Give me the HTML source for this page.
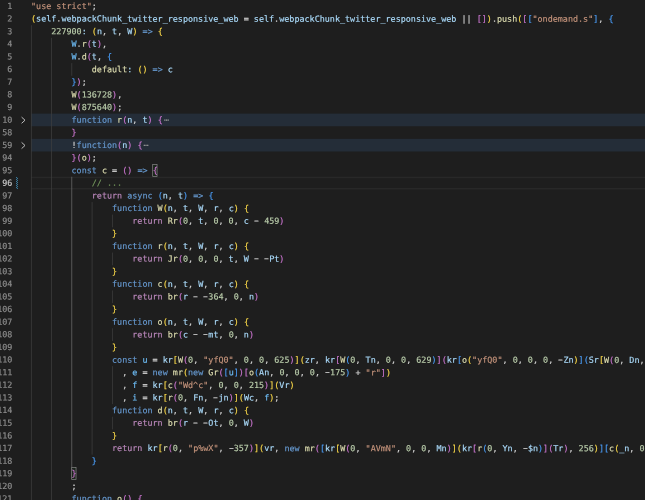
<!DOCTYPE html>
<html lang="en">
<head>
<meta charset="utf-8">
<title>ondemand.s.js</title>
<style>
html,body{margin:0;padding:0;background:#1e1e1e;}
body{width:645px;height:500px;overflow:hidden;position:relative;}
.ed{position:absolute;left:0;top:0;width:645px;height:500px;overflow:hidden;background:#1e1e1e;color:#d4d4d4;
font-family:"DejaVu Sans Mono", "Liberation Mono", monospace;font-size:8.42px;line-height:12.63px;letter-spacing:0.002px;
font-variant-ligatures:none;-webkit-text-stroke:0.15px;text-rendering:geometricPrecision;font-kerning:none;-webkit-font-smoothing:antialiased;}
.l,.ln{position:absolute;height:12.63px;white-space:pre;transform-origin:0 0;}
.l{left:30.8px;}
.ln{left:-20px;width:32.4px;text-align:right;color:#8e8e8e;}
.ln.a{color:#cccccc;}
.s{color:#c5947c}.v{color:#aadafa}.k{color:#679ad1}.c{color:#bc89bd}.f{color:#dcdcaf}
.n{color:#bacdab}.m{color:#74985c}.K{color:#6fbff9}
.b1{color:#f9d849}.b2{color:#cc76d1}.b3{color:#4a9df8}
.h{display:inline-block;transform:scaleX(1.75) translateY(-0.35px);}
.fd{color:#9a9a9a;margin-left:1.1px;position:relative;top:-0.3px}
.tx{position:absolute;left:0;top:0;width:645px;height:500px;will-change:transform;}
.ov{position:absolute;left:0;top:0;}
.dd{position:absolute;width:2.2px;background:repeating-linear-gradient(-45deg,#3a7798 0,#3a7798 0.75px,#1e2a30 0.75px,#1e2a30 1.5px);}

</style>
</head>
<body>
<div class="ed">
<div class="dd" style="left:16.3px;top:176.77px;height:12.63px"></div>
<svg class="ov" width="645" height="500" viewBox="0 0 645 500"><rect x="31.1" y="113.62" width="620" height="12.63" fill="#242d38"/><rect x="31.1" y="138.88" width="620" height="12.63" fill="#242d38"/><rect x="31.1" y="176.77" width="620" height="1.4" fill="#282828"/><rect x="31.1" y="188.00" width="620" height="1.4" fill="#282828"/><rect x="30.95" y="25.21" width="0.7" height="479.94" fill="#404040"/><rect x="51.21" y="37.84" width="0.7" height="467.31" fill="#404040"/><rect x="71.47" y="63.10" width="0.7" height="12.63" fill="#404040"/><rect x="71.47" y="176.77" width="0.7" height="290.49" fill="#707070"/><rect x="91.72" y="202.03" width="0.7" height="252.60" fill="#404040"/><rect x="111.98" y="214.66" width="0.7" height="12.63" fill="#404040"/><rect x="111.98" y="252.55" width="0.7" height="12.63" fill="#404040"/><rect x="111.98" y="290.44" width="0.7" height="12.63" fill="#404040"/><rect x="111.98" y="328.33" width="0.7" height="12.63" fill="#404040"/><rect x="111.98" y="366.22" width="0.7" height="37.89" fill="#404040"/><rect x="111.98" y="416.74" width="0.7" height="12.63" fill="#404040"/><rect x="152.70" y="164.49" width="4.36" height="11.93" fill="rgba(0,100,0,0.1)" stroke="#888888" stroke-width="0.7"/><rect x="71.67" y="467.61" width="4.36" height="11.93" fill="rgba(0,100,0,0.1)" stroke="#888888" stroke-width="0.7"/><path d="M21.60 117.12 L25.00 120.22 L21.60 123.32" fill="none" stroke="#c5c5c5" stroke-width="0.95"/><path d="M21.60 142.38 L25.00 145.48 L21.60 148.58" fill="none" stroke="#c5c5c5" stroke-width="0.95"/></svg>
<div class="tx">
<div class="ln" style="top:-1px;transform:matrix(1,0.0005,0,1,0,0.950)">1</div>
<div class="l" style="top:-1px;transform:matrix(1,0.0005,0,1,0,0.950)"><span class="s">"use strict"</span>;</div>
<div class="ln" style="top:12px;transform:matrix(1,0.0005,0,1,0,0.580)">2</div>
<div class="l" style="top:12px;transform:matrix(1,0.0005,0,1,0,0.580)"><span class="b1">(</span><span class="v">self</span>.<span class="v">webpackChunk_twitter_responsive_web</span> = <span class="v">self</span>.<span class="v">webpackChunk_twitter_responsive_web</span> || <span class="b2">[</span><span class="b2">]</span><span class="b1">)</span>.<span class="f">push</span><span class="b1">(</span><span class="b2">[</span><span class="b3">[</span><span class="s">"ondemand.s"</span><span class="b3">]</span>, <span class="b3">{</span></div>
<div class="ln" style="top:25px;transform:matrix(1,0.0005,0,1,0,0.210)">3</div>
<div class="l" style="top:25px;transform:matrix(1,0.0005,0,1,0,0.210)">    <span class="n">227900</span><span class="v">:</span> <span class="b1">(</span><span class="v">n</span>, <span class="v">t</span>, <span class="v">W</span><span class="b1">)</span> <span class="k">=&gt;</span> <span class="b1">{</span></div>
<div class="ln" style="top:37px;transform:matrix(1,0.0005,0,1,0,0.840)">4</div>
<div class="l" style="top:37px;transform:matrix(1,0.0005,0,1,0,0.840)">        <span class="K">W</span>.<span class="f">r</span><span class="b2">(</span><span class="v">t</span><span class="b2">)</span>,</div>
<div class="ln" style="top:50px;transform:matrix(1,0.0005,0,1,0,0.470)">5</div>
<div class="l" style="top:50px;transform:matrix(1,0.0005,0,1,0,0.470)">        <span class="K">W</span>.<span class="f">d</span><span class="b2">(</span><span class="v">t</span>, <span class="b3">{</span></div>
<div class="ln" style="top:63px;transform:matrix(1,0.0005,0,1,0,0.100)">6</div>
<div class="l" style="top:63px;transform:matrix(1,0.0005,0,1,0,0.100)">            <span class="f">default</span><span class="v">:</span> <span class="b1">(</span><span class="b1">)</span> <span class="k">=&gt;</span> <span class="v">c</span></div>
<div class="ln" style="top:75px;transform:matrix(1,0.0005,0,1,0,0.730)">7</div>
<div class="l" style="top:75px;transform:matrix(1,0.0005,0,1,0,0.730)">        <span class="b3">}</span><span class="b2">)</span>;</div>
<div class="ln" style="top:88px;transform:matrix(1,0.0005,0,1,0,0.360)">8</div>
<div class="l" style="top:88px;transform:matrix(1,0.0005,0,1,0,0.360)">        <span class="f">W</span><span class="b2">(</span><span class="n">136728</span><span class="b2">)</span>,</div>
<div class="ln" style="top:100px;transform:matrix(1,0.0005,0,1,0,0.990)">9</div>
<div class="l" style="top:100px;transform:matrix(1,0.0005,0,1,0,0.990)">        <span class="f">W</span><span class="b2">(</span><span class="n">875640</span><span class="b2">)</span>;</div>
<div class="ln" style="top:113px;transform:matrix(1,0.0005,0,1,0,0.620)">10</div>
<div class="l" style="top:113px;transform:matrix(1,0.0005,0,1,0,0.620)">        <span class="k">function</span> <span class="f">r</span><span class="b2">(</span><span class="v">n</span>, <span class="v">t</span><span class="b2">)</span> <span class="b2">{</span><span class="fd">⋯</span></div>
<div class="ln" style="top:126px;transform:matrix(1,0.0005,0,1,0,0.250)">58</div>
<div class="l" style="top:126px;transform:matrix(1,0.0005,0,1,0,0.250)">        <span class="b2">}</span></div>
<div class="ln" style="top:138px;transform:matrix(1,0.0005,0,1,0,0.880)">59</div>
<div class="l" style="top:138px;transform:matrix(1,0.0005,0,1,0,0.880)">        !<span class="k">function</span><span class="b2">(</span><span class="v">n</span><span class="b2">)</span> <span class="b2">{</span><span class="fd">⋯</span></div>
<div class="ln" style="top:151px;transform:matrix(1,0.0005,0,1,0,0.510)">94</div>
<div class="l" style="top:151px;transform:matrix(1,0.0005,0,1,0,0.510)">        <span class="b2">}</span><span class="b2">(</span><span class="f">o</span><span class="b2">)</span>;</div>
<div class="ln" style="top:164px;transform:matrix(1,0.0005,0,1,0,0.140)">95</div>
<div class="l" style="top:164px;transform:matrix(1,0.0005,0,1,0,0.140)">        <span class="k">const</span> <span class="f">c</span> = <span class="b2">(</span><span class="b2">)</span> <span class="k">=&gt;</span> <span class="b2">{</span></div>
<div class="ln a" style="top:176px;transform:matrix(1,0.0005,0,1,0,0.770)">96</div>
<div class="l" style="top:176px;transform:matrix(1,0.0005,0,1,0,0.770)">            <span class="m">// ...</span></div>
<div class="ln" style="top:189px;transform:matrix(1,0.0005,0,1,0,0.400)">97</div>
<div class="l" style="top:189px;transform:matrix(1,0.0005,0,1,0,0.400)">            <span class="c">return</span> <span class="k">async</span> <span class="b3">(</span><span class="v">n</span>, <span class="v">t</span><span class="b3">)</span> <span class="k">=&gt;</span> <span class="b3">{</span></div>
<div class="ln" style="top:202px;transform:matrix(1,0.0005,0,1,0,0.030)">98</div>
<div class="l" style="top:202px;transform:matrix(1,0.0005,0,1,0,0.030)">                <span class="k">function</span> <span class="f">W</span><span class="b1">(</span><span class="v">n</span>, <span class="v">t</span>, <span class="v">W</span>, <span class="v">r</span>, <span class="v">c</span><span class="b1">)</span> <span class="b1">{</span></div>
<div class="ln" style="top:214px;transform:matrix(1,0.0005,0,1,0,0.660)">99</div>
<div class="l" style="top:214px;transform:matrix(1,0.0005,0,1,0,0.660)">                    <span class="c">return</span> <span class="f">Rr</span><span class="b2">(</span><span class="n">0</span>, <span class="v">t</span>, <span class="n">0</span>, <span class="n">0</span>, <span class="v">c</span> <span class="h">-</span> <span class="n">459</span><span class="b2">)</span></div>
<div class="ln" style="top:227px;transform:matrix(1,0.0005,0,1,0,0.290)">100</div>
<div class="l" style="top:227px;transform:matrix(1,0.0005,0,1,0,0.290)">                <span class="b1">}</span></div>
<div class="ln" style="top:239px;transform:matrix(1,0.0005,0,1,0,0.920)">101</div>
<div class="l" style="top:239px;transform:matrix(1,0.0005,0,1,0,0.920)">                <span class="k">function</span> <span class="f">r</span><span class="b1">(</span><span class="v">n</span>, <span class="v">t</span>, <span class="v">W</span>, <span class="v">r</span>, <span class="v">c</span><span class="b1">)</span> <span class="b1">{</span></div>
<div class="ln" style="top:252px;transform:matrix(1,0.0005,0,1,0,0.550)">102</div>
<div class="l" style="top:252px;transform:matrix(1,0.0005,0,1,0,0.550)">                    <span class="c">return</span> <span class="f">Jr</span><span class="b2">(</span><span class="n">0</span>, <span class="n">0</span>, <span class="n">0</span>, <span class="v">t</span>, <span class="v">W</span> <span class="h">-</span> <span class="h">-</span><span class="v">Pt</span><span class="b2">)</span></div>
<div class="ln" style="top:265px;transform:matrix(1,0.0005,0,1,0,0.180)">103</div>
<div class="l" style="top:265px;transform:matrix(1,0.0005,0,1,0,0.180)">                <span class="b1">}</span></div>
<div class="ln" style="top:277px;transform:matrix(1,0.0005,0,1,0,0.810)">104</div>
<div class="l" style="top:277px;transform:matrix(1,0.0005,0,1,0,0.810)">                <span class="k">function</span> <span class="f">c</span><span class="b1">(</span><span class="v">n</span>, <span class="v">t</span>, <span class="v">W</span>, <span class="v">r</span>, <span class="v">c</span><span class="b1">)</span> <span class="b1">{</span></div>
<div class="ln" style="top:290px;transform:matrix(1,0.0005,0,1,0,0.440)">105</div>
<div class="l" style="top:290px;transform:matrix(1,0.0005,0,1,0,0.440)">                    <span class="c">return</span> <span class="f">br</span><span class="b2">(</span><span class="v">r</span> <span class="h">-</span> <span class="h">-</span><span class="n">364</span>, <span class="n">0</span>, <span class="v">n</span><span class="b2">)</span></div>
<div class="ln" style="top:303px;transform:matrix(1,0.0005,0,1,0,0.070)">106</div>
<div class="l" style="top:303px;transform:matrix(1,0.0005,0,1,0,0.070)">                <span class="b1">}</span></div>
<div class="ln" style="top:315px;transform:matrix(1,0.0005,0,1,0,0.700)">107</div>
<div class="l" style="top:315px;transform:matrix(1,0.0005,0,1,0,0.700)">                <span class="k">function</span> <span class="f">o</span><span class="b1">(</span><span class="v">n</span>, <span class="v">t</span>, <span class="v">W</span>, <span class="v">r</span>, <span class="v">c</span><span class="b1">)</span> <span class="b1">{</span></div>
<div class="ln" style="top:328px;transform:matrix(1,0.0005,0,1,0,0.330)">108</div>
<div class="l" style="top:328px;transform:matrix(1,0.0005,0,1,0,0.330)">                    <span class="c">return</span> <span class="f">br</span><span class="b2">(</span><span class="v">c</span> <span class="h">-</span> <span class="h">-</span><span class="v">mt</span>, <span class="n">0</span>, <span class="v">n</span><span class="b2">)</span></div>
<div class="ln" style="top:340px;transform:matrix(1,0.0005,0,1,0,0.960)">109</div>
<div class="l" style="top:340px;transform:matrix(1,0.0005,0,1,0,0.960)">                <span class="b1">}</span></div>
<div class="ln" style="top:353px;transform:matrix(1,0.0005,0,1,0,0.590)">110</div>
<div class="l" style="top:353px;transform:matrix(1,0.0005,0,1,0,0.590)">                <span class="k">const</span> <span class="K">u</span> = <span class="v">kr</span><span class="b1">[</span><span class="f">W</span><span class="b2">(</span><span class="n">0</span>, <span class="s">"yfQ0"</span>, <span class="n">0</span>, <span class="n">0</span>, <span class="n">625</span><span class="b2">)</span><span class="b1">]</span><span class="b1">(</span><span class="v">zr</span>, <span class="v">kr</span><span class="b2">[</span><span class="f">W</span><span class="b3">(</span><span class="n">0</span>, <span class="v">Tn</span>, <span class="n">0</span>, <span class="n">0</span>, <span class="n">629</span><span class="b3">)</span><span class="b2">]</span><span class="b2">(</span><span class="v">kr</span><span class="b3">[</span><span class="f">o</span><span class="b1">(</span><span class="s">"yfQ0"</span>, <span class="n">0</span>, <span class="n">0</span>, <span class="n">0</span>, <span class="h">-</span><span class="v">Zn</span><span class="b1">)</span><span class="b3">]</span><span class="b3">(</span><span class="v">Sr</span><span class="b1">[</span><span class="f">W</span><span class="b2">(</span><span class="n">0</span>, <span class="v">Dn</span>,</div>
<div class="ln" style="top:366px;transform:matrix(1,0.0005,0,1,0,0.220)">111</div>
<div class="l" style="top:366px;transform:matrix(1,0.0005,0,1,0,0.220)">                  , <span class="K">e</span> = <span class="k">new</span> <span class="f">mr</span><span class="b1">(</span><span class="k">new</span> <span class="f">Gr</span><span class="b2">(</span><span class="b3">[</span><span class="K">u</span><span class="b3">]</span><span class="b2">)</span><span class="b2">[</span><span class="f">o</span><span class="b3">(</span><span class="v">An</span>, <span class="n">0</span>, <span class="n">0</span>, <span class="n">0</span>, <span class="h">-</span><span class="n">175</span><span class="b3">)</span> + <span class="s">"r"</span><span class="b2">]</span><span class="b1">)</span></div>
<div class="ln" style="top:378px;transform:matrix(1,0.0005,0,1,0,0.850)">112</div>
<div class="l" style="top:378px;transform:matrix(1,0.0005,0,1,0,0.850)">                  , <span class="K">f</span> = <span class="v">kr</span><span class="b1">[</span><span class="f">c</span><span class="b2">(</span><span class="s">"Wd^c"</span>, <span class="n">0</span>, <span class="n">0</span>, <span class="n">215</span><span class="b2">)</span><span class="b1">]</span><span class="b1">(</span><span class="v">Vr</span><span class="b1">)</span></div>
<div class="ln" style="top:391px;transform:matrix(1,0.0005,0,1,0,0.480)">113</div>
<div class="l" style="top:391px;transform:matrix(1,0.0005,0,1,0,0.480)">                  , <span class="K">i</span> = <span class="v">kr</span><span class="b1">[</span><span class="f">r</span><span class="b2">(</span><span class="n">0</span>, <span class="v">Fn</span>, <span class="h">-</span><span class="v">jn</span><span class="b2">)</span><span class="b1">]</span><span class="b1">(</span><span class="v">Wc</span>, <span class="K">f</span><span class="b1">)</span>;</div>
<div class="ln" style="top:404px;transform:matrix(1,0.0005,0,1,0,0.110)">114</div>
<div class="l" style="top:404px;transform:matrix(1,0.0005,0,1,0,0.110)">                <span class="k">function</span> <span class="f">d</span><span class="b1">(</span><span class="v">n</span>, <span class="v">t</span>, <span class="v">W</span>, <span class="v">r</span>, <span class="v">c</span><span class="b1">)</span> <span class="b1">{</span></div>
<div class="ln" style="top:416px;transform:matrix(1,0.0005,0,1,0,0.740)">115</div>
<div class="l" style="top:416px;transform:matrix(1,0.0005,0,1,0,0.740)">                    <span class="c">return</span> <span class="f">br</span><span class="b2">(</span><span class="v">r</span> <span class="h">-</span> <span class="h">-</span><span class="v">Ot</span>, <span class="n">0</span>, <span class="v">W</span><span class="b2">)</span></div>
<div class="ln" style="top:429px;transform:matrix(1,0.0005,0,1,0,0.370)">116</div>
<div class="l" style="top:429px;transform:matrix(1,0.0005,0,1,0,0.370)">                <span class="b1">}</span></div>
<div class="ln" style="top:442px;transform:matrix(1,0.0005,0,1,0,0.000)">117</div>
<div class="l" style="top:442px;transform:matrix(1,0.0005,0,1,0,0.000)">                <span class="c">return</span> <span class="v">kr</span><span class="b1">[</span><span class="f">r</span><span class="b2">(</span><span class="n">0</span>, <span class="s">"p%wX"</span>, <span class="h">-</span><span class="n">357</span><span class="b2">)</span><span class="b1">]</span><span class="b1">(</span><span class="v">vr</span>, <span class="k">new</span> <span class="f">mr</span><span class="b2">(</span><span class="b3">[</span><span class="v">kr</span><span class="b1">[</span><span class="f">W</span><span class="b2">(</span><span class="n">0</span>, <span class="s">"AVmN"</span>, <span class="n">0</span>, <span class="n">0</span>, <span class="v">Mn</span><span class="b2">)</span><span class="b1">]</span><span class="b1">(</span><span class="v">kr</span><span class="b2">[</span><span class="f">r</span><span class="b3">(</span><span class="n">0</span>, <span class="v">Yn</span>, <span class="h">-</span><span class="v">$n</span><span class="b3">)</span><span class="b2">]</span><span class="b2">(</span><span class="v">Tr</span><span class="b2">)</span>, <span class="n">256</span><span class="b1">)</span><span class="b3">]</span><span class="b3">[</span><span class="f">c</span><span class="b1">(</span><span class="v">_n</span>, <span class="n">0</span></div>
<div class="ln" style="top:454px;transform:matrix(1,0.0005,0,1,0,0.630)">118</div>
<div class="l" style="top:454px;transform:matrix(1,0.0005,0,1,0,0.630)">            <span class="b3">}</span></div>
<div class="ln" style="top:467px;transform:matrix(1,0.0005,0,1,0,0.260)">119</div>
<div class="l" style="top:467px;transform:matrix(1,0.0005,0,1,0,0.260)">        <span class="b2">}</span></div>
<div class="ln" style="top:479px;transform:matrix(1,0.0005,0,1,0,0.890)">120</div>
<div class="l" style="top:479px;transform:matrix(1,0.0005,0,1,0,0.890)">        ;</div>
<div class="ln" style="top:492px;transform:matrix(1,0.0005,0,1,0,0.520)">121</div>
<div class="l" style="top:492px;transform:matrix(1,0.0005,0,1,0,0.520)">        <span class="k">function</span> <span class="f">o</span><span class="b2">(</span><span class="b2">)</span> <span class="b2">{</span></div>
</div>
</div>
</body>
</html>
